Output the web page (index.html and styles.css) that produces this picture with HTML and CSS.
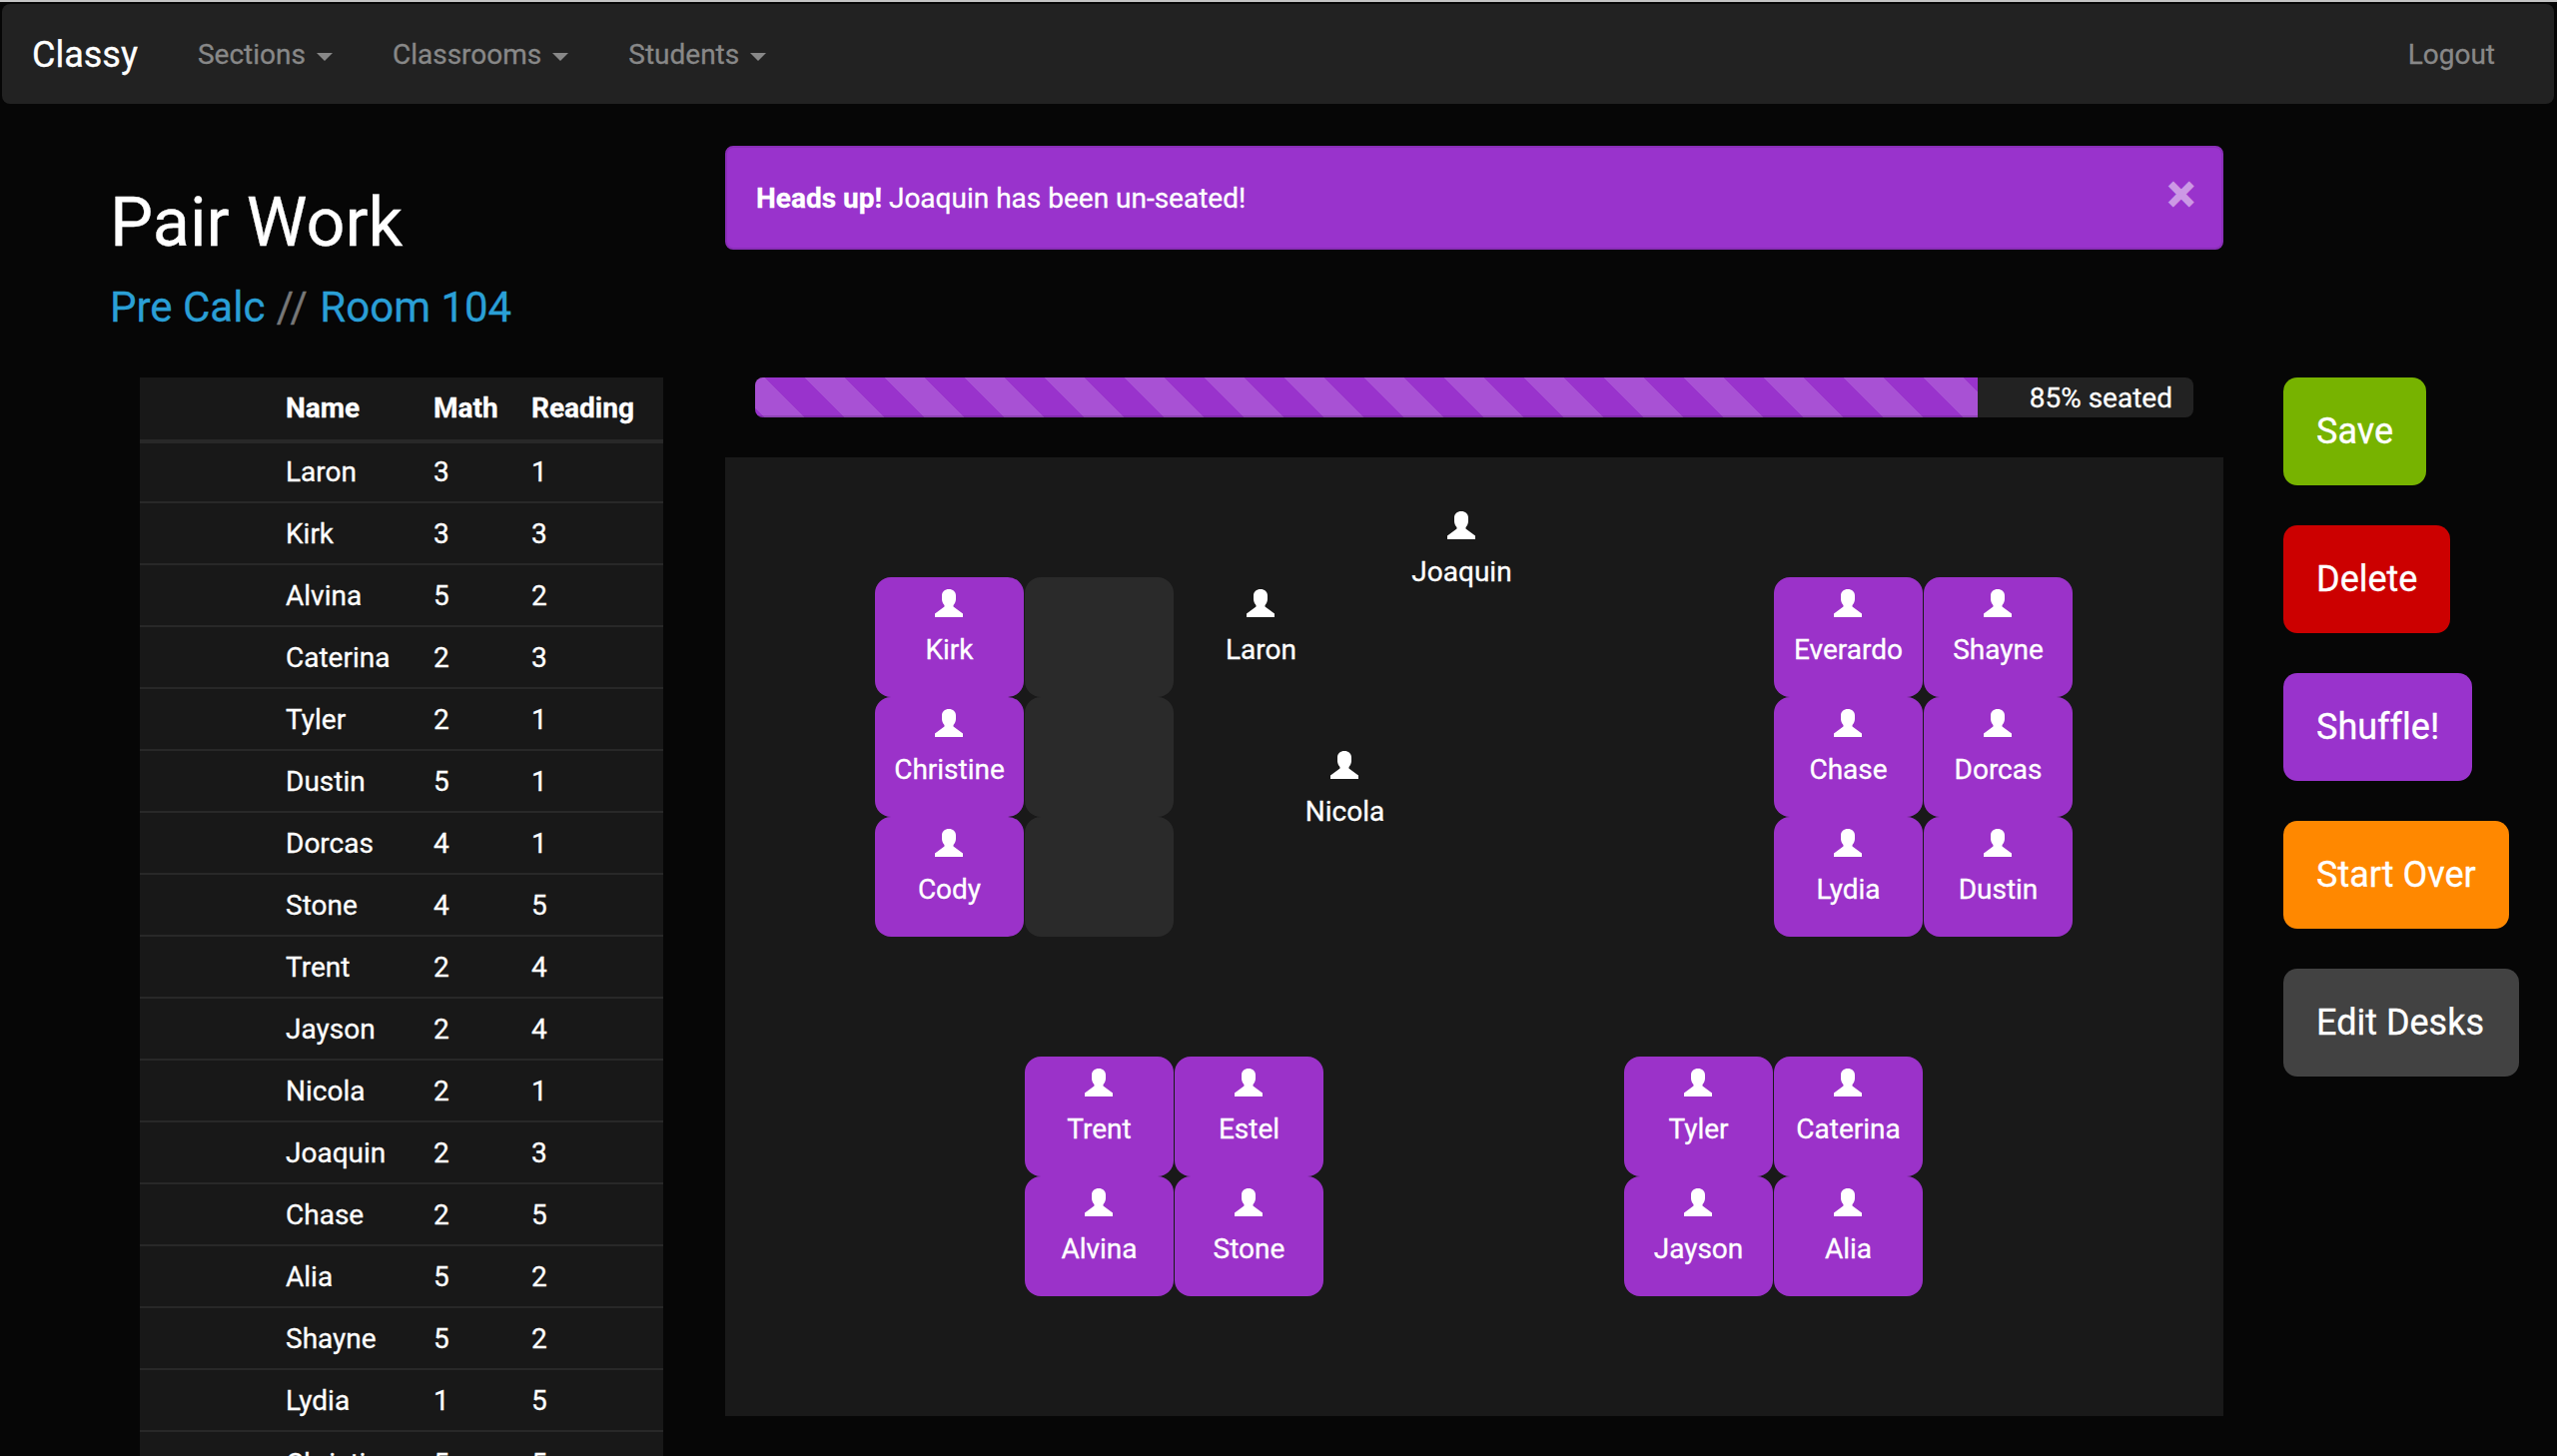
FILE: index.html
```html
<!DOCTYPE html>
<html lang="en">
<head>
<meta charset="utf-8">
<title>Classy</title>
<link rel="stylesheet" href="styles.css">
</head>
<body>
<svg class="defs" width="0" height="0" aria-hidden="true"><symbol id="user" viewBox="0 0 28 28"><path d="M14 0C10 0 7 2.4 7 6.5V10c0 2 1 4.5 2.5 6v1.5L0 24.5V28h28v-3.5l-9.5-7V16c1.5-1.5 2.5-4 2.5-6V6.5C21 2.4 18 0 14 0z"/></symbol></svg>
<nav class="navbar">
  <a class="brand">Classy</a>
  <a class="nav-link">Sections<span class="caret"></span></a>
  <a class="nav-link">Classrooms<span class="caret"></span></a>
  <a class="nav-link">Students<span class="caret"></span></a>
  <a class="nav-link logout">Logout</a>
</nav>
<main class="layout">
  <section class="left">
    <h1 class="title">Pair Work</h1>
    <h3 class="subtitle"><a>Pre Calc</a> <span class="sep">//</span> <a>Room 104</a></h3>
    <table class="roster">
      <thead><tr><th class="c0"></th><th class="c1">Name</th><th class="c2">Math</th><th class="c3">Reading</th></tr></thead>
      <tbody>
        <tr><td></td><td>Laron</td><td>3</td><td>1</td></tr>
        <tr><td></td><td>Kirk</td><td>3</td><td>3</td></tr>
        <tr><td></td><td>Alvina</td><td>5</td><td>2</td></tr>
        <tr><td></td><td>Caterina</td><td>2</td><td>3</td></tr>
        <tr><td></td><td>Tyler</td><td>2</td><td>1</td></tr>
        <tr><td></td><td>Dustin</td><td>5</td><td>1</td></tr>
        <tr><td></td><td>Dorcas</td><td>4</td><td>1</td></tr>
        <tr><td></td><td>Stone</td><td>4</td><td>5</td></tr>
        <tr><td></td><td>Trent</td><td>2</td><td>4</td></tr>
        <tr><td></td><td>Jayson</td><td>2</td><td>4</td></tr>
        <tr><td></td><td>Nicola</td><td>2</td><td>1</td></tr>
        <tr><td></td><td>Joaquin</td><td>2</td><td>3</td></tr>
        <tr><td></td><td>Chase</td><td>2</td><td>5</td></tr>
        <tr><td></td><td>Alia</td><td>5</td><td>2</td></tr>
        <tr><td></td><td>Shayne</td><td>5</td><td>2</td></tr>
        <tr><td></td><td>Lydia</td><td>1</td><td>5</td></tr>
        <tr><td></td><td>Christine</td><td>5</td><td>5</td></tr>
      </tbody>
    </table>
  </section>
  <section class="center">
    <div class="alert"><span><strong>Heads up!</strong> Joaquin has been un-seated!</span><span class="close">×</span></div>
    <div class="progress"><div class="progress-bar" style="width:85%"></div><span class="progress-label">85% seated</span></div>
    <div class="room">
      <div class="desk filled" style="left:150px;top:120px"><svg class="icon"><use href="#user"/></svg><span>Kirk</span></div>
      <div class="desk filled" style="left:150px;top:240px"><svg class="icon"><use href="#user"/></svg><span>Christine</span></div>
      <div class="desk filled" style="left:150px;top:360px"><svg class="icon"><use href="#user"/></svg><span>Cody</span></div>
      <div class="desk empty" style="left:300px;top:120px"></div>
      <div class="desk empty" style="left:300px;top:240px"></div>
      <div class="desk empty" style="left:300px;top:360px"></div>
      <div class="desk" style="left:462px;top:120px"><svg class="icon"><use href="#user"/></svg><span>Laron</span></div>
      <div class="desk" style="left:663px;top:42px"><svg class="icon"><use href="#user"/></svg><span>Joaquin</span></div>
      <div class="desk" style="left:546px;top:282px"><svg class="icon"><use href="#user"/></svg><span>Nicola</span></div>
      <div class="desk filled" style="left:1050px;top:120px"><svg class="icon"><use href="#user"/></svg><span>Everardo</span></div>
      <div class="desk filled" style="left:1200px;top:120px"><svg class="icon"><use href="#user"/></svg><span>Shayne</span></div>
      <div class="desk filled" style="left:1050px;top:240px"><svg class="icon"><use href="#user"/></svg><span>Chase</span></div>
      <div class="desk filled" style="left:1200px;top:240px"><svg class="icon"><use href="#user"/></svg><span>Dorcas</span></div>
      <div class="desk filled" style="left:1050px;top:360px"><svg class="icon"><use href="#user"/></svg><span>Lydia</span></div>
      <div class="desk filled" style="left:1200px;top:360px"><svg class="icon"><use href="#user"/></svg><span>Dustin</span></div>
      <div class="desk filled" style="left:300px;top:600px"><svg class="icon"><use href="#user"/></svg><span>Trent</span></div>
      <div class="desk filled" style="left:450px;top:600px"><svg class="icon"><use href="#user"/></svg><span>Estel</span></div>
      <div class="desk filled" style="left:300px;top:720px"><svg class="icon"><use href="#user"/></svg><span>Alvina</span></div>
      <div class="desk filled" style="left:450px;top:720px"><svg class="icon"><use href="#user"/></svg><span>Stone</span></div>
      <div class="desk filled" style="left:900px;top:600px"><svg class="icon"><use href="#user"/></svg><span>Tyler</span></div>
      <div class="desk filled" style="left:1050px;top:600px"><svg class="icon"><use href="#user"/></svg><span>Caterina</span></div>
      <div class="desk filled" style="left:900px;top:720px"><svg class="icon"><use href="#user"/></svg><span>Jayson</span></div>
      <div class="desk filled" style="left:1050px;top:720px"><svg class="icon"><use href="#user"/></svg><span>Alia</span></div>
    </div>
  </section>
  <section class="actions">
    <a class="btn btn-save">Save</a>
    <a class="btn btn-delete">Delete</a>
    <a class="btn btn-shuffle">Shuffle!</a>
    <a class="btn btn-start">Start Over</a>
    <a class="btn btn-edit">Edit Desks</a>
  </section>
</main>
</body>
</html>
```
FILE: styles.css
```css
* { box-sizing: border-box; }
html, body { height: 100%; overflow: hidden; }
body {
  margin: 0;
  padding: 2px 3px 0 2px;
  background: #060606;
  border-top: 2px solid #c4c4c4;
  background-clip: padding-box;
  color: #fff;
  font-family: Roboto, "Liberation Sans", sans-serif;
  font-size: 28px;
  line-height: 40px;
  font-variant-ligatures: none;
  -webkit-text-stroke: .3px;
}
.defs { position: absolute; }

.navbar {
  display: flex;
  align-items: center;
  height: 100px;
  padding: 0 38px 0 30px;
  background: #222;
  border-radius: 8px;
}
.brand { font-size: 36px; color: #fff; margin-right: 60px; position: relative; top: 1px; }
.nav-link { color: #888; margin-right: 60px; display: flex; align-items: center; position: relative; top: 1px; }
.caret {
  width: 0; height: 0;
  margin-left: 11px;
  margin-top: 3px;
  border-top: 8px solid #888;
  border-left: 8px solid transparent;
  border-right: 8px solid transparent;
}
.logout { margin-left: auto; margin-right: 21px; }

.layout {
  display: grid;
  grid-template-columns: 724px 1500px 1fr;
  align-items: start;
}

.left { padding-left: 108px; }
.title {
  margin: 79px 0 0;
  font-size: 68.4px;
  line-height: 80px;
  font-weight: 400;
}
.subtitle {
  margin: 15px 0 0;
  font-size: 42px;
  line-height: 60px;
  font-weight: 400;
  color: #2a9fd6;
}
.sep { color: #777; margin: 0 1px; letter-spacing: 1px; }

.roster {
  margin: 40px 0 0 30px;
  width: 524px;
  table-layout: fixed;
  border-collapse: collapse;
  background: #181818;
}
.roster th {
  height: 64px;
  padding: 0;
  text-align: left;
  font-weight: 700;
  border-bottom: 4px solid #282828;
}
.roster td {
  height: 62px;
  padding: 2px 0 0;
  border-top: 2px solid #282828;
}
.roster tbody tr:first-child td { border-top: 0; height: 61px; padding-top: 0; }
.c0 { width: 146px; }
.c1 { width: 148px; }
.c2 { width: 98px; }

.alert {
  display: flex;
  justify-content: space-between;
  align-items: center;
  height: 104px;
  margin-top: 42px;
  padding: 2px 29px 0;
  background: #9933cc;
  border: 2px solid #8a2eb8;
  border-radius: 8px;
}
.close {
  font-family: "Liberation Sans", sans-serif;
  font-weight: 700;
  font-size: 46px;
  line-height: 40px;
  opacity: .5;
  position: relative;
  top: -5px;
  left: 2px;
  -webkit-text-stroke: 2px;
}

.progress {
  position: relative;
  height: 40px;
  margin: 128px 30px 0;
  background: #222;
  border-radius: 8px;
  overflow: hidden;
}
.progress-bar {
  height: 100%;
  background-color: #9933cc;
  background-image: linear-gradient(45deg, rgba(255,255,255,.15) 25%, transparent 25%, transparent 50%, rgba(255,255,255,.15) 50%, rgba(255,255,255,.15) 75%, transparent 75%, transparent);
  background-size: 80px 80px;
  background-position: -30px 0;
  box-shadow: inset 0 -2px 0 rgba(0,0,0,.15);
}
.progress-label {
  position: absolute;
  right: 21px;
  top: 1px;
  line-height: 40px;
}

.room {
  position: relative;
  height: 960px;
  margin-top: 40px;
  background: #191919;
}
.desk {
  position: absolute;
  width: 149px;
  height: 120px;
  padding-top: 12px;
  display: flex;
  flex-direction: column;
  align-items: center;
  border-radius: 16px;
}
.filled { background: #9b32c9; }
.empty { background: #2a2a2a; }
.icon { width: 28px; height: 28px; fill: #fff; margin: 0 1px 8px 0; }
.desk span { line-height: 50px; }

.actions {
  display: flex;
  flex-direction: column;
  align-items: flex-start;
  gap: 40px;
  margin-top: 274px;
  padding-left: 60px;
}
.btn {
  height: 108px;
  padding: 0 33px;
  display: flex;
  align-items: center;
  font-size: 36px;
  color: #fff;
  border-radius: 14px;
}
.btn-save { background: #77b300; }
.btn-delete { background: #cc0000; }
.btn-shuffle { background: #9933cc; }
.btn-start { background: #ff8800; }
.btn-edit { background: #424242; padding-right: 35px; }
```
